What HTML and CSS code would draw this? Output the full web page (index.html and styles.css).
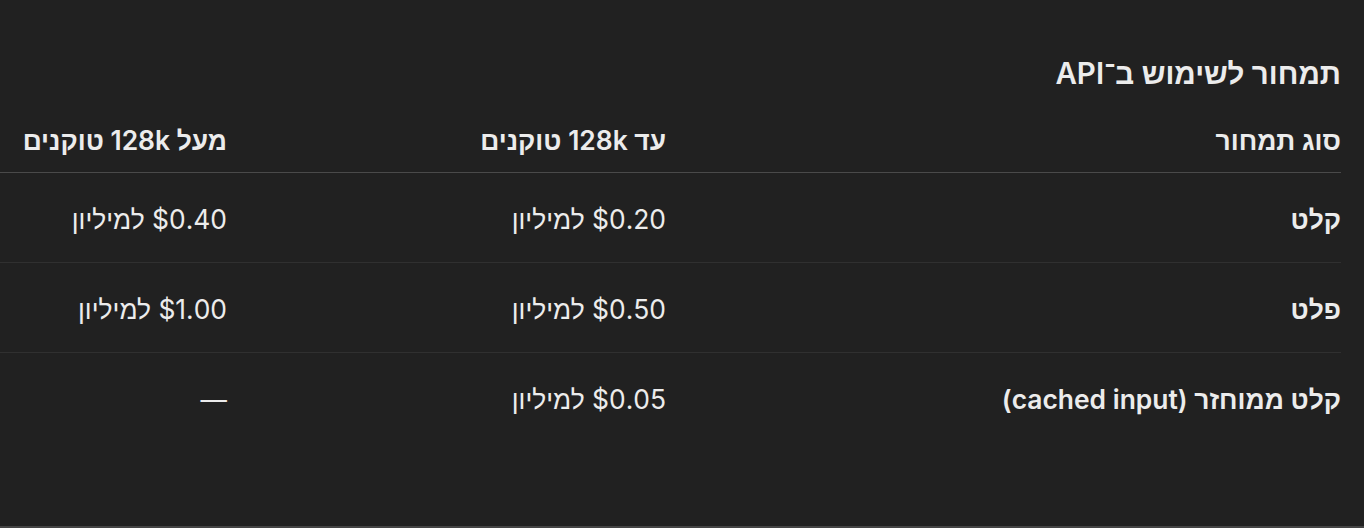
FILE: index.html
```html
<!DOCTYPE html>
<html lang="he" dir="rtl">
<head>
<meta charset="utf-8">
<title>תמחור לשימוש ב־API</title>
<link rel="stylesheet" href="styles.css">
</head>
<body>
<main class="page">
  <h3 class="title">תמחור לשימוש ב־API</h3>
  <div class="table-wrap">
    <table class="pricing">
      <colgroup>
        <col class="c1">
        <col class="c2">
        <col class="c3">
      </colgroup>
      <thead>
        <tr>
          <th>סוג תמחור</th>
          <th>עד 128k טוקנים</th>
          <th>מעל 128k טוקנים</th>
        </tr>
      </thead>
      <tbody>
        <tr>
          <td class="label">קלט</td>
          <td>$0.20 למיליון</td>
          <td>$0.40 למיליון</td>
        </tr>
        <tr>
          <td class="label">פלט</td>
          <td>$0.50 למיליון</td>
          <td>$1.00 למיליון</td>
        </tr>
        <tr>
          <td class="label">קלט ממוחזר (cached input)</td>
          <td>$0.05 למיליון</td>
          <td>—</td>
        </tr>
      </tbody>
    </table>
  </div>
</main>
<div class="bottom-rule"></div>
</body>
</html>
```

FILE: styles.css
```css
html, body {
  margin: 0;
  padding: 0;
  background: #212121;
}

body {
  height: 528px;
  overflow: hidden;
  color: #ececec;
  font-family: "Inter", "Liberation Sans", "DejaVu Sans", sans-serif;
  display: flex;
  flex-direction: column;
}

.page {
  flex: 1;
  padding: 53px 23px 0 0;
}

.title {
  margin: 0;
  font-size: 29.5px;
  line-height: 40px;
  font-weight: 600;
}

.table-wrap {
  margin-top: 30px;
  width: 1341px;
}

.pricing {
  width: 100%;
  table-layout: fixed;
  border-collapse: collapse;
  font-size: 26.4px;
}

.c1 { width: 663px; }
.c2 { width: 439px; }
.c3 { width: 239px; }

.pricing th {
  text-align: right;
  font-weight: 600;
  padding: 0 12px 15px 12px;
  line-height: 34px;
  border-bottom: 1.5px solid #4a4a4a;
}

.pricing td {
  text-align: right;
  font-weight: 400;
  padding: 2px 12px 0 12px;
  height: 87px;
  line-height: 34px;
  border-bottom: 1px solid #303030;
  vertical-align: middle;
}

.pricing tbody tr:last-child td {
  border-bottom: none;
}

.pricing th:first-child,
.pricing td:first-child {
  padding-right: 0;
}

.pricing td.label {
  font-weight: 600;
}

.bottom-rule {
  height: 2px;
  background: #454545;
  flex: none;
}
```
